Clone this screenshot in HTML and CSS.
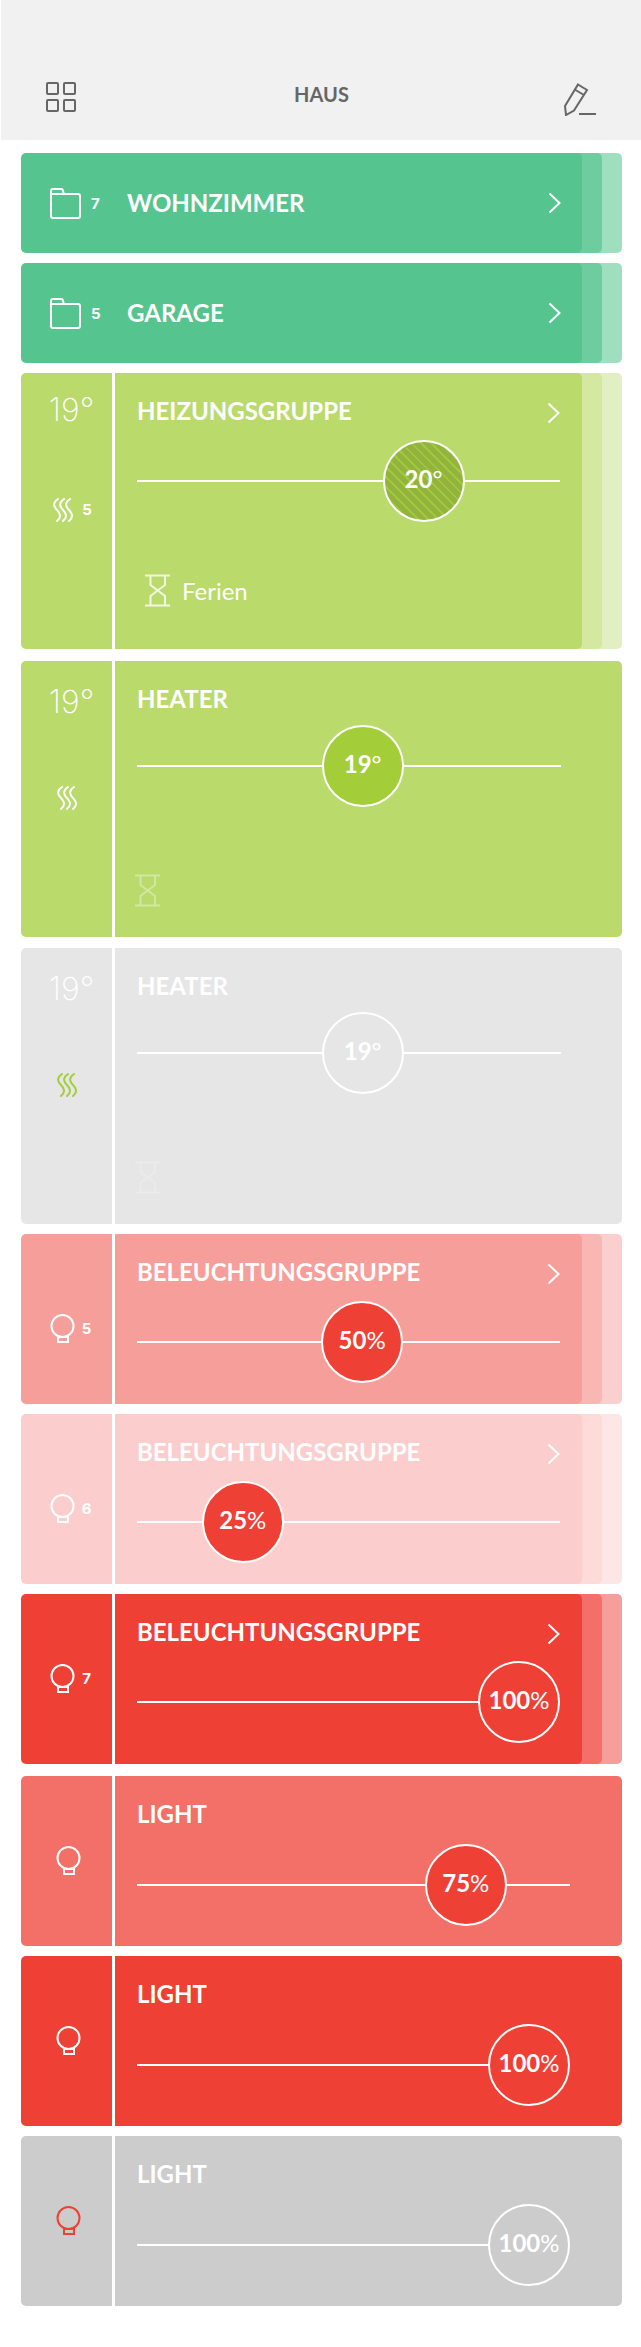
FILE: index.html
```html
<!DOCTYPE html>
<html lang="de">
<head>
<meta charset="utf-8">
<meta name="viewport" content="width=device-width, initial-scale=1">
<title>Haus</title>
<link rel="stylesheet" href="styles.css">
</head>
<body>
<svg class="sprite" aria-hidden="true">
  <symbol id="folder" viewBox="0 0 31 31"><path d="M1 6V3a2 2 0 0 1 2-2h8a2 2 0 0 1 2 2l1 3h14a2 2 0 0 1 2 2v20a2 2 0 0 1-2 2H3a2 2 0 0 1-2-2V6h13"/></symbol>
  <symbol id="chevron" viewBox="0 0 13 22"><path d="M1.500 1.500 11.500 11 1.500 20.500"/></symbol>
  <symbol id="waves" viewBox="0 0 22 24"><path d="M5 1C-1 5 1 9 4 12s5 7 0 11M11 1C5 5 7 9 10 12s5 7 0 11M17 1c-6 4-4 8-1 11s5 7 0 11"/></symbol>
  <symbol id="bulb" viewBox="0 0 25 29"><circle cx="12.500" cy="12" r="11"/><path d="M8 23h10v5H8z"/></symbol>
  <symbol id="hourglass" viewBox="0 0 25 33"><path d="M0 1.500h25M0 31.500h25M5.500 2v9L20 22v9M20 2v9L5.500 22v9"/></symbol>
</svg>

<header class="topbar">
  <button class="icon-button" type="button" aria-label="Übersicht">
    <svg width="30" height="30" viewBox="0 0 30 30"><rect x="1" y="1" width="11" height="11" rx="1"/><rect x="18" y="1" width="11" height="11" rx="1"/><rect x="1" y="18" width="11" height="11" rx="1"/><rect x="18" y="18" width="11" height="11" rx="1"/></svg>
  </button>
  <h1 class="topbar-title">HAUS</h1>
  <button class="icon-button edit" type="button" aria-label="Bearbeiten">
    <svg width="33" height="33" viewBox="0 0 33 33"><path d="M14 1.500 23 7 10 27.500 2 32 1 23zM11.500 7l8.500 5M15 31h17"/></svg>
  </button>
</header>

<main class="list">
  <section class="section">
    <a class="card stack room" href="#wohnzimmer">
      <svg class="folder"><use href="#folder"/></svg>
      <span class="count">7</span>
      <h2 class="title">WOHNZIMMER</h2>
      <svg class="chevron"><use href="#chevron"/></svg>
    </a>
    <a class="card stack room" href="#garage">
      <svg class="folder"><use href="#folder"/></svg>
      <span class="count">5</span>
      <h2 class="title">GARAGE</h2>
      <svg class="chevron"><use href="#chevron"/></svg>
    </a>
    <article class="card stack heater">
      <div class="side">
        <span class="temp">19°</span>
        <span class="status"><svg class="waves"><use href="#waves"/></svg><span class="count">5</span></span>
      </div>
      <div class="body">
        <div class="head">
          <h2 class="title">HEIZUNGSGRUPPE</h2>
          <a class="open" href="#heizungsgruppe" aria-label="Heizungsgruppe öffnen"><svg class="chevron"><use href="#chevron"/></svg></a>
        </div>
        <div class="slider striped" style="--pos: 0.72">
          <input id="s1" type="range" min="0" max="100" value="72" aria-label="Heizungsgruppe" aria-valuetext="20°">
          <output for="s1">20<span class="unit">°</span></output>
        </div>
        <p class="mode"><svg class="hourglass"><use href="#hourglass"/></svg>Ferien</p>
      </div>
    </article>
  </section>

  <section class="section heaters">
    <article class="card heater single">
      <div class="side">
        <span class="temp">19°</span>
        <span class="status"><svg class="waves"><use href="#waves"/></svg></span>
      </div>
      <div class="body">
        <h2 class="title">HEATER</h2>
        <div class="slider" style="--pos: 0.54">
          <input id="s2" type="range" min="0" max="100" value="54" aria-label="Heater" aria-valuetext="19°">
          <output for="s2">19<span class="unit">°</span></output>
        </div>
        <p class="mode"><svg class="hourglass"><use href="#hourglass"/></svg></p>
      </div>
    </article>
    <article class="card heater single off">
      <div class="side">
        <span class="temp">19°</span>
        <span class="status"><svg class="waves"><use href="#waves"/></svg></span>
      </div>
      <div class="body">
        <h2 class="title">HEATER</h2>
        <div class="slider" style="--pos: 0.54">
          <input id="s3" type="range" min="0" max="100" value="54" aria-label="Heater" aria-valuetext="19°">
          <output for="s3">19<span class="unit">°</span></output>
        </div>
        <p class="mode"><svg class="hourglass"><use href="#hourglass"/></svg></p>
      </div>
    </article>
  </section>

  <section class="section">
    <article class="card stack light level-50">
      <div class="side low">
        <span class="status"><svg class="bulb"><use href="#bulb"/></svg><span class="count">5</span></span>
      </div>
      <div class="body">
        <div class="head">
          <h2 class="title">BELEUCHTUNGSGRUPPE</h2>
          <a class="open" href="#gruppe-1" aria-label="Beleuchtungsgruppe öffnen"><svg class="chevron"><use href="#chevron"/></svg></a>
        </div>
        <div class="slider" style="--pos: 0.54">
          <input id="s4" type="range" min="0" max="100" value="54" aria-label="Beleuchtungsgruppe" aria-valuetext="50%">
          <output for="s4">50<span class="unit">%</span></output>
        </div>
      </div>
    </article>
    <article class="card stack light level-25">
      <div class="side low">
        <span class="status"><svg class="bulb"><use href="#bulb"/></svg><span class="count">6</span></span>
      </div>
      <div class="body">
        <div class="head">
          <h2 class="title">BELEUCHTUNGSGRUPPE</h2>
          <a class="open" href="#gruppe-2" aria-label="Beleuchtungsgruppe öffnen"><svg class="chevron"><use href="#chevron"/></svg></a>
        </div>
        <div class="slider" style="--pos: 0.19">
          <input id="s5" type="range" min="0" max="100" value="19" aria-label="Beleuchtungsgruppe" aria-valuetext="25%">
          <output for="s5">25<span class="unit">%</span></output>
        </div>
      </div>
    </article>
    <article class="card stack light">
      <div class="side">
        <span class="status"><svg class="bulb"><use href="#bulb"/></svg><span class="count">7</span></span>
      </div>
      <div class="body">
        <div class="head">
          <h2 class="title">BELEUCHTUNGSGRUPPE</h2>
          <a class="open" href="#gruppe-3" aria-label="Beleuchtungsgruppe öffnen"><svg class="chevron"><use href="#chevron"/></svg></a>
        </div>
        <div class="slider" style="--pos: 1">
          <input id="s6" type="range" min="0" max="100" value="100" aria-label="Beleuchtungsgruppe" aria-valuetext="100%">
          <output for="s6">100<span class="unit">%</span></output>
        </div>
      </div>
    </article>
  </section>

  <section class="section">
    <article class="card light single level-75">
      <div class="side">
        <span class="status"><svg class="bulb"><use href="#bulb"/></svg></span>
      </div>
      <div class="body">
        <h2 class="title">LIGHT</h2>
        <div class="slider" style="--pos: 0.82">
          <input id="s7" type="range" min="0" max="100" value="82" aria-label="Light" aria-valuetext="75%">
          <output for="s7">75<span class="unit">%</span></output>
        </div>
      </div>
    </article>
    <article class="card light single">
      <div class="side">
        <span class="status"><svg class="bulb"><use href="#bulb"/></svg></span>
      </div>
      <div class="body">
        <h2 class="title">LIGHT</h2>
        <div class="slider" style="--pos: 1">
          <input id="s8" type="range" min="0" max="100" value="100" aria-label="Light" aria-valuetext="100%">
          <output for="s8">100<span class="unit">%</span></output>
        </div>
      </div>
    </article>
    <article class="card light single off">
      <div class="side">
        <span class="status"><svg class="bulb"><use href="#bulb"/></svg></span>
      </div>
      <div class="body">
        <h2 class="title">LIGHT</h2>
        <div class="slider" style="--pos: 1">
          <input id="s9" type="range" min="0" max="100" value="100" aria-label="Light" aria-valuetext="100%">
          <output for="s9">100<span class="unit">%</span></output>
        </div>
      </div>
    </article>
  </section>
</main>
</body>
</html>
```
FILE: styles.css
```css
* {
  box-sizing: border-box;
}

body {
  margin: 0;
  background: #fff;
  color: #fff;
  font-family: Lato, "Liberation Sans", sans-serif;
}

h1,
h2,
p {
  margin: 0;
}

svg {
  display: block;
  flex: none;
  fill: none;
  stroke: currentColor;
  stroke-width: 2px;
}

.sprite {
  position: absolute;
  width: 0;
  height: 0;
}

/* Top bar */

.topbar {
  display: grid;
  grid-template-columns: 1fr auto 1fr;
  align-items: start;
  margin-left: 1px;
  padding: 82px 44px 24px 45px;
  background: #f1f1f1;
  color: #666;
}

.topbar-title {
  font-size: 20px;
  line-height: 24px;
  font-weight: 700;
}

.icon-button {
  justify-self: start;
  padding: 0;
  border: 0;
  background: none;
  color: inherit;
  cursor: pointer;
}

.icon-button.edit {
  justify-self: end;
  padding-top: 1px;
}

/* Cards */

.list {
  padding: 13px 19px 40px 21px;
}

.section {
  display: grid;
  gap: 10px;
  margin-bottom: 12px;
}

.section.heaters {
  gap: 11px;
  margin-bottom: 10px;
}

.section:last-child {
  margin-bottom: 0;
}

.card {
  display: flex;
  border-radius: 5px;
  background: var(--bg);
  color: inherit;
  text-decoration: none;
}

.card.stack {
  margin-right: 40px;
  box-shadow: 20px 0 var(--layer-1), 40px 0 var(--layer-2);
}

.title {
  font-size: 24px;
  line-height: 24px;
  font-weight: 700;
}

.count {
  font-family: Inter, Lato, sans-serif;
  font-size: 15px;
  line-height: 20px;
  font-weight: 700;
}

.folder {
  width: 31px;
  height: 31px;
}

.chevron {
  width: 13px;
  height: 22px;
}

.waves {
  width: 22px;
  height: 24px;
  stroke-linecap: round;
}

.bulb {
  width: 25px;
  height: 29px;
}

.hourglass {
  width: 25px;
  height: 33px;
  opacity: 0.8;
}

/* Rooms */

.room {
  --bg: #56c48f;
  --layer-1: #6dcd9f;
  --layer-2: #9fdfc0;
  align-items: center;
  min-height: 100px;
  padding: 0 21px 0 29px;
}

.room .count {
  width: 36px;
  margin-left: 10px;
  padding-top: 2px;
}

.room .title {
  flex: 1;
}

/* Devices */

.side {
  flex: none;
  width: 94px;
  border-right: 3px solid #fff;
}

.body {
  flex: 1;
  min-width: 0;
  padding: 26px 22px 0 22px;
}

.head {
  display: flex;
  justify-content: space-between;
  align-items: flex-start;
}

.open {
  padding-top: 3px;
  color: inherit;
}

.status {
  display: flex;
  align-items: center;
  justify-content: center;
  gap: 7px;
  padding-left: 8px;
}

.single .status {
  padding-left: 3px;
}

.heater {
  --bg: #bada6c;
  --layer-1: #d5e8a1;
  --layer-2: #e2efc3;
  --knob: #a3ce39;
  min-height: 276px;
}

.heater .side {
  padding-top: 19px;
}

.heater.single .side {
  padding-top: 23px;
}

.heater.single .body {
  padding-right: 61px;
}

.heater.single.off {
  --bg: #e6e6e6;
  --knob: #e6e6e6;
}

.temp {
  display: block;
  padding-left: 10px;
  font-family: Inter, Lato, sans-serif;
  font-size: 32px;
  line-height: 36px;
  font-weight: 200;
  text-align: center;
}

.heater .status {
  margin-top: 70px;
  padding-left: 12px;
}

.heater.single .status {
  margin-top: 66px;
  padding-left: 3px;
}

.heater.off .status {
  color: #a3ce39;
}

.mode {
  display: flex;
  align-items: center;
  gap: 12px;
  margin-top: 52px;
  padding-left: 8px;
  font-size: 24px;
  line-height: 30px;
  font-weight: 400;
}

.single .mode {
  margin-top: 67px;
  margin-left: -2px;
  padding-left: 0;
}

.single .hourglass {
  opacity: 0.35;
}

.off .hourglass {
  opacity: 0.2;
}

.light {
  --bg: #ef4036;
  --layer-1: #f36f68;
  --layer-2: #f69e99;
  --knob: #ef4036;
  min-height: 170px;
}

.light .side {
  padding-top: 70px;
}

.light .side.low {
  padding-top: 80px;
}

.light.single .body {
  padding-right: 52px;
}

.light.level-75 {
  --bg: #f37068;
}

.light.level-50 {
  --bg: #f69e99;
  --layer-1: #f9b7b3;
  --layer-2: #fbcfcd;
}

.light.level-25 {
  --bg: #fbcecd;
  --layer-1: #fcdbd8;
  --layer-2: #fde7e6;
}

.light.off {
  --bg: #ccc;
  --knob: #ccc;
}

.light.off .status {
  color: #ef4036;
}

/* Slider: the value sits over the knob in the same grid cell */

.slider {
  --knob-fill: var(--knob);
  display: grid;
  margin-top: 16px;
}

.heater.single .slider {
  margin-top: 14px;
}

.light.single .slider {
  margin-top: 18px;
}

.slider.striped {
  --knob-fill: repeating-linear-gradient(45deg, #92b43f 0 5px, #a0c83a 5px 7px);
}

.slider input,
.slider output {
  grid-area: 1 / 1;
}

.slider input {
  appearance: none;
  width: 100%;
  height: 82px;
  margin: 0;
  background: none;
  cursor: pointer;
}

.slider input::-webkit-slider-runnable-track {
  height: 82px;
  background: linear-gradient(#fff, #fff) center / 100% 2px no-repeat;
}

.slider input::-webkit-slider-thumb {
  appearance: none;
  width: 82px;
  height: 82px;
  border: 2px solid #fff;
  border-radius: 50%;
  background: var(--knob-fill) border-box;
}

.slider output {
  width: 82px;
  margin-left: calc((100% - 82px) * var(--pos));
  padding-bottom: 4px;
  align-self: center;
  font-size: 24px;
  line-height: 28px;
  font-weight: 700;
  text-align: center;
  pointer-events: none;
}

.unit {
  font-weight: 400;
}
```
